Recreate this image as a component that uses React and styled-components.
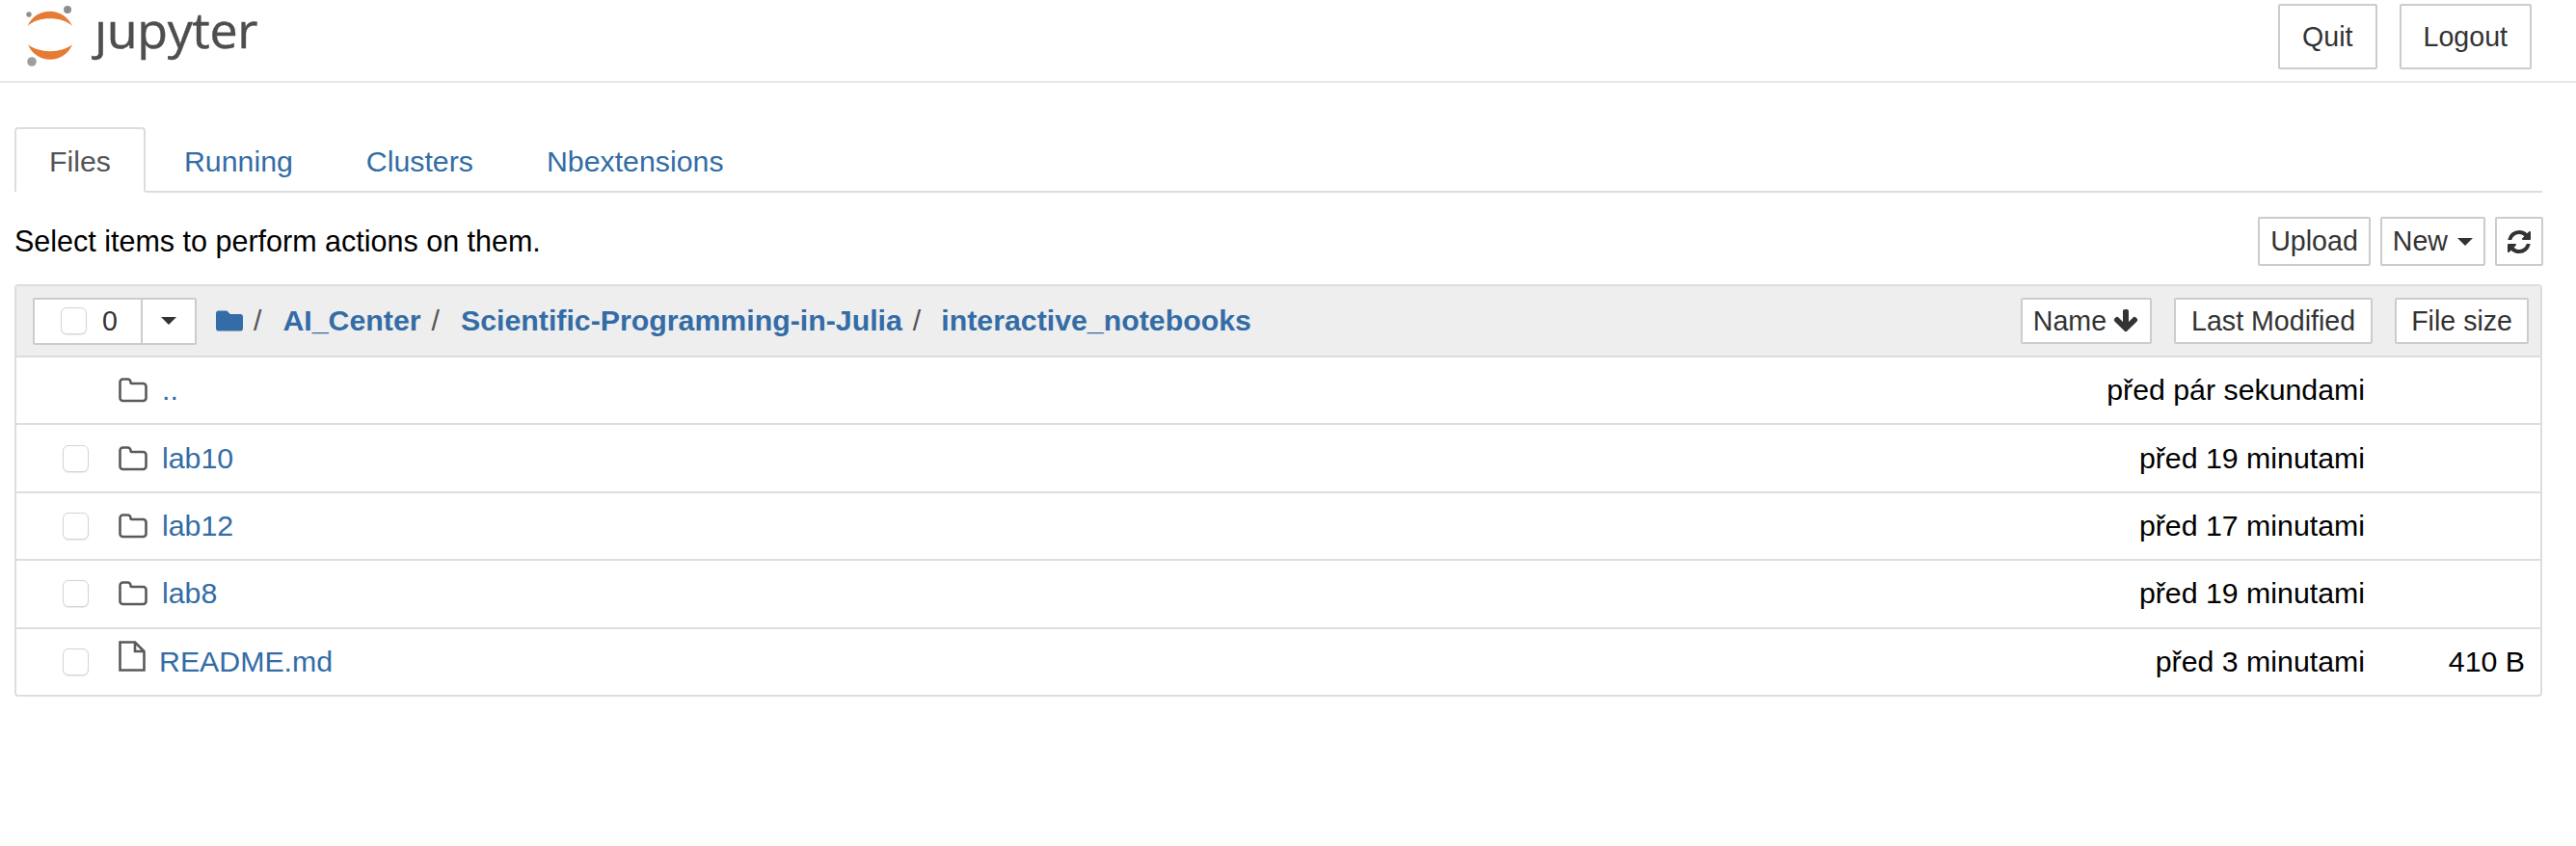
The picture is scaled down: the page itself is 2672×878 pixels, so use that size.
import { createGlobalStyle } from "styled-components";
import styled from "styled-components";
import { FaFolder } from "react-icons/fa";

const GlobalStyle = createGlobalStyle`
  html, body {
    margin: 0;
    padding: 0;
    background: #fff;
    color: #000;
    font-family: "Liberation Sans", Arial, sans-serif;
    font-size: 30.3px;
  }
  a {
    color: #336ca6;
    text-decoration: none;
  }
`;

const Header = styled.header`
  display: flex;
  align-items: flex-start;
  justify-content: space-between;
  height: 80px;
  padding: 4px 46px 0 28px;
  border-bottom: 2px solid #e7e7e7;
`;

const Logo = styled.div`
  display: flex;
  align-items: flex-start;
  gap: 14px;
  height: 72px;
`;

const LogoText = styled.span`
  font-family: "Open Sans", sans-serif;
  font-size: 52px;
  line-height: 52px;
  color: #4e4e4e;
  letter-spacing: -0.4px;
  -webkit-text-stroke: 0.4px #4e4e4e;
`;

const HeaderButtons = styled.div`
  display: flex;
  gap: 23px;
`;

const HeaderButton = styled.button`
  height: 68px;
  padding: 0 ${(p) => p.$pad}px;
  border: 2px solid #ccc;
  border-radius: 2px;
  background: #fff;
  color: #333;
  font-family: inherit;
  font-size: 28.6px;
`;

const Main = styled.main`
  padding: 0 34px 0 15px;
`;

const Tabs = styled.nav`
  display: flex;
  margin-top: 46px;
  height: 66px;
  margin-right: 1px;
  border-bottom: 2px solid #ddd;
`;

const Tab = styled.a`
  display: flex;
  align-items: center;
  height: 68px;
  margin-right: 4px;
  padding: 4px 34px 0;
  border: 2px solid ${(p) => (p.$active ? "#ddd" : "transparent")};
  border-bottom-color: ${(p) => (p.$active ? "#fff" : "transparent")};
  border-radius: 4px 4px 0 0;
  color: ${(p) => (p.$active ? "#555" : "#336ca6")};
  background: ${(p) => (p.$active ? "#fff" : "transparent")};
  box-sizing: border-box;
`;

const Toolbar = styled.div`
  display: flex;
  align-items: center;
  justify-content: space-between;
  margin-top: 25px;
  height: 51px;
  font-size: 30.5px;
`;

const ToolbarButtons = styled.div`
  display: flex;
  gap: 10px;
`;

const SmallButton = styled.button`
  display: flex;
  align-items: center;
  justify-content: center;
  gap: ${(p) => p.$gap || 8}px;
  height: ${(p) => p.$height || 51}px;
  padding: 0 ${(p) => p.$pad}px;
  border: 2px solid #ccc;
  border-radius: 2px;
  background: #fff;
  color: #333;
  font-family: inherit;
  font-size: 28.6px;
  box-sizing: border-box;
`;

const Caret = styled.span`
  display: inline-block;
  width: 0;
  height: 0;
  border-top: 8px solid #333;
  border-left: 8px solid transparent;
  border-right: 8px solid transparent;
`;

const List = styled.section`
  margin-top: 19px;
  margin-right: 1px;
  border: 2px solid #ddd;
  border-radius: 4px;
`;

const ListHeader = styled.div`
  display: flex;
  align-items: center;
  justify-content: space-between;
  height: 72px;
  padding: 0 12px 0 17px;
  background: #eee;
`;

const HeaderLeft = styled.div`
  display: flex;
  align-items: center;
`;

const SelectGroup = styled.div`
  display: flex;
  width: 170px;
  height: 49px;
  border: 2px solid #ccc;
  border-radius: 2px;
  background: #fff;
  box-sizing: border-box;
`;

const SelectCount = styled.div`
  display: flex;
  align-items: center;
  width: 112px;
  padding-left: 27px;
  gap: 16px;
  border-right: 2px solid #ccc;
  color: #333;
  font-size: 28.6px;
  box-sizing: border-box;
`;

const SelectToggle = styled.div`
  display: flex;
  align-items: center;
  justify-content: center;
  flex: 1;
`;

const Check = styled.input.attrs({ type: "checkbox" })`
  appearance: none;
  flex: none;
  width: 27px;
  height: 28px;
  margin: 0;
  border: 1px solid #d4d4d4;
  border-radius: 6px;
  background: #fff;
  box-shadow: 0 1px 1px rgba(0, 0, 0, 0.08);
`;

const Breadcrumb = styled.div`
  display: flex;
  align-items: center;
  margin-left: 20px;
  font-weight: bold;
`;

const Slash = styled.span`
  margin: 0 ${(p) => p.$right}px 0 11px;
  color: #555;
  font-weight: normal;
`;

const SortButtons = styled.div`
  display: flex;
  gap: 23px;
`;

const Row = styled.div`
  display: flex;
  align-items: center;
  height: 68.4px;
  padding-left: 48px;
  padding-right: 16px;
  border-top: 2px solid #ddd;
`;

const RowCheck = styled.div`
  flex: none;
  width: 27px;
  margin-right: 31px;
  display: flex;
`;

const RowIcon = styled.svg`
  flex: none;
  margin-right: ${(p) => p.$gap}px;
  margin-bottom: ${(p) => p.$lift || 0}px;
  fill: none;
  stroke: #5a5a5a;
  stroke-width: 2.6;
`;

const RowName = styled.a`
  flex: 1;
`;

const RowDate = styled.span`
  white-space: nowrap;
`;

const RowSize = styled.span`
  width: 166px;
  text-align: right;
`;

const MarkSvg = styled.svg`
  overflow: visible;
  flex: none;
`;

function JupyterMark() {
  return (
    <MarkSvg width="56" height="72" viewBox="0 0 56 72">
      <path d="M0.5 23 C 9 2.5, 38 2.5, 47 23 C 37 12.5, 11 12.5, 0.5 23 Z" fill="#e67b34" />
      <path d="M1 42 C 11 51.5, 37 51.5, 47 42 C 39 63, 9 63, 1 42 Z" fill="#e67b34" />
      <circle cx="42" cy="6" r="4" fill="#8e8e8e" />
      <circle cx="2" cy="11" r="2.7" fill="#8e8e8e" />
      <circle cx="5" cy="60" r="4.8" fill="#9e9e9e" />
    </MarkSvg>
  );
}

function RefreshIcon() {
  return (
    <svg width="28" height="28" viewBox="0 0 1792 1792" fill="#333">
      <path d="M1639 1056q0 5-1 7-64 268-268 434.5t-478 166.5q-146 0-282.5-55t-243.5-157l-129 129q-19 19-45 19t-45-19-19-45v-448q0-26 19-45t45-19h448q26 0 45 19t19 45-19 45l-137 137q71 66 161 102t187 36q134 0 250-65t186-179q11-17 53-117 8-23 30-23h192q13 0 22.5 9.5t9.5 22.5zm25-800v448q0 26-19 45t-45 19h-448q-26 0-45-19t-19-45 19-45l138-138q-148-137-349-137-134 0-250 65t-186 179q-11 17-53 117-8 23-30 23h-199q-13 0-22.5-9.5t-9.5-22.5v-7q65-268 270-434.5t480-166.5q146 0 284 55.5t245 156.5l130-129q19-19 45-19t45 19 19 45z" />
    </svg>
  );
}

function ArrowDownIcon() {
  return (
    <svg width="28" height="28" viewBox="0 0 1792 1792" fill="#333">
      <path d="M1675 832q0 53-37 90l-651 652q-39 37-91 37-53 0-90-37l-651-652q-38-36-38-90 0-53 38-91l74-75q39-37 91-37 53 0 90 37l294 294v-704q0-52 38-90t90-38h128q52 0 90 38t38 90v704l294-294q37-37 90-37 52 0 91 37l75 75q37 39 37 91z" />
    </svg>
  );
}

function FolderIcon() {
  return (
    <RowIcon width="30" height="26" viewBox="0 0 30 26" $gap={15}>
      <path d="M1.5 4.5 a3 3 0 0 1 3 -3 h5 a3 3 0 0 1 3 3 v0.5 a1 1 0 0 0 1 1 h12 a3 3 0 0 1 3 3 v12 a3 3 0 0 1 -3 3 h-21 a3 3 0 0 1 -3 -3 Z" />
    </RowIcon>
  );
}

function FileIcon() {
  return (
    <RowIcon width="28" height="32" viewBox="0 0 28 32" $gap={14} $lift={12}>
      <path d="M1.5 1.5 h15.5 l9.5 9.5 v19.5 h-25 Z M17 1.5 v9.5 h9.5" />
    </RowIcon>
  );
}

const rows = [
  { name: "..", date: "před pár sekundami", parent: true },
  { name: "lab10", date: "před 19 minutami" },
  { name: "lab12", date: "před 17 minutami" },
  { name: "lab8", date: "před 19 minutami" },
  { name: "README.md", date: "před 3 minutami", size: "410 B", file: true },
];

export default function App() {
  return (
    <>
      <GlobalStyle />
      <Header>
        <Logo>
          <JupyterMark />
          <LogoText>ȷupyter</LogoText>
        </Logo>
        <HeaderButtons>
          <HeaderButton $pad={23}>Quit</HeaderButton>
          <HeaderButton $pad={23}>Logout</HeaderButton>
        </HeaderButtons>
      </Header>
      <Main>
        <Tabs>
          <Tab $active>Files</Tab>
          <Tab>Running</Tab>
          <Tab>Clusters</Tab>
          <Tab>Nbextensions</Tab>
        </Tabs>
        <Toolbar>
          <span>Select items to perform actions on them.</span>
          <ToolbarButtons>
            <SmallButton $pad={11}>Upload</SmallButton>
            <SmallButton $pad={11} $gap={10}>
              New <Caret />
            </SmallButton>
            <SmallButton $pad={9}>
              <RefreshIcon />
            </SmallButton>
          </ToolbarButtons>
        </Toolbar>
        <List>
          <ListHeader>
            <HeaderLeft>
              <SelectGroup>
                <SelectCount>
                  <Check />0
                </SelectCount>
                <SelectToggle>
                  <Caret />
                </SelectToggle>
              </SelectGroup>
              <Breadcrumb>
                <FaFolder size={28} color="#336ca6" />
                <Slash $right={22}>/</Slash>
                <a>AI_Center</a>
                <Slash $right={22}>/</Slash>
                <a>Scientific-Programming-in-Julia</a>
                <Slash $right={21}>/</Slash>
                <a>interactive_notebooks</a>
              </Breadcrumb>
            </HeaderLeft>
            <SortButtons>
              <SmallButton $height={48} $pad={11} $gap={6}>
                Name <ArrowDownIcon />
              </SmallButton>
              <SmallButton $height={48} $pad={16}>Last Modified</SmallButton>
              <SmallButton $height={48} $pad={15}>File size</SmallButton>
            </SortButtons>
          </ListHeader>
          {rows.map((row) => (
            <Row key={row.name}>
              <RowCheck>{!row.parent && <Check />}</RowCheck>
              {row.file ? <FileIcon /> : <FolderIcon />}
              <RowName>{row.name}</RowName>
              <RowDate>{row.date}</RowDate>
              <RowSize>{row.size}</RowSize>
            </Row>
          ))}
        </List>
      </Main>
    </>
  );
}
